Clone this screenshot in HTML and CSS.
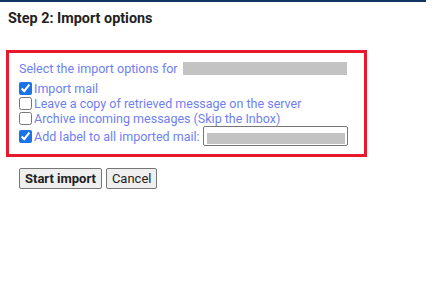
FILE: index.html
```html
<!DOCTYPE html>
<html lang="en">

<head>
    <meta charset="UTF-8">
    <title>Import options</title>
    <link rel="stylesheet" href="styles.css">
</head>

<body>
    <div class="topbar"></div>
    <h2 class="step-title">Step 2: Import options</h2>

    <div class="options-box">
        <div class="intro">Select the import options for <span class="hidden-email"></span></div>
        <label class="option"><input type="checkbox" checked><span>Import mail</span></label>
        <label class="option"><input type="checkbox"><span>Leave a copy of retrieved message on the server</span></label>
        <label class="option"><input type="checkbox"><span>Archive incoming messages (Skip the Inbox)</span></label>
        <label class="option label-row"><input type="checkbox" checked><span>Add label to all imported mail:</span><span class="label-input"><span class="hidden-label"></span></span></label>
    </div>

    <div class="actions">
        <button class="btn btn-primary">Start import</button>
        <button class="btn">Cancel</button>
    </div>
</body>

</html>
```

FILE: styles.css
```css
body {
    margin: 0;
    font-family: Roboto, "Liberation Sans", Arial, sans-serif;
    background-color: #fff;
}

.topbar {
    width: 426px;
    height: 2px;
    background-color: #123463;
}

.step-title {
    margin: 9px 0 0 8px;
    font-size: 14.4px;
    line-height: 16px;
    font-weight: bold;
    color: #222;
}

.options-box {
    margin: 23px 0 0 6px;
    border: 3px solid #e8192c;
    padding: 8px 0 8px 10px;
    box-sizing: content-box;
    width: 345px;
    color: #6e7ff3;
    font-size: 12.5px;
    line-height: 15px;
}

.intro {
    display: flex;
    align-items: center;
    white-space: nowrap;
    margin-bottom: 5px;
}

.hidden-email {
    display: inline-block;
    width: 164px;
    height: 13px;
    margin-left: 5px;
    background-color: #c3c3c3;
}

.option {
    display: flex;
    align-items: center;
    height: 15px;
    white-space: nowrap;
}

.option input {
    width: 13px;
    height: 13px;
    margin: 0 2px 0 0;
    accent-color: #1a73e8;
}

.label-row {
    height: 20px;
}

.label-input {
    display: inline-block;
    flex: none;
    width: 143px;
    height: 18px;
    margin-left: 3px;
    border: 1px solid #767676;
    border-radius: 2px;
    position: relative;
}

.hidden-label {
    position: absolute;
    left: 3px;
    top: 6px;
    width: 138px;
    height: 11px;
    background-color: #c3c3c3;
}

.actions {
    display: flex;
    gap: 4px;
    margin: 11px 0 0 19px;
}

.btn {
    height: 21px;
    padding: 0 5px;
    font-family: Roboto, "Liberation Sans", Arial, sans-serif;
    font-size: 13px;
    color: #222;
    background-color: #efefef;
    border: 1px solid #767676;
    border-radius: 2px;
}

.btn-primary {
    font-weight: bold;
}
```
